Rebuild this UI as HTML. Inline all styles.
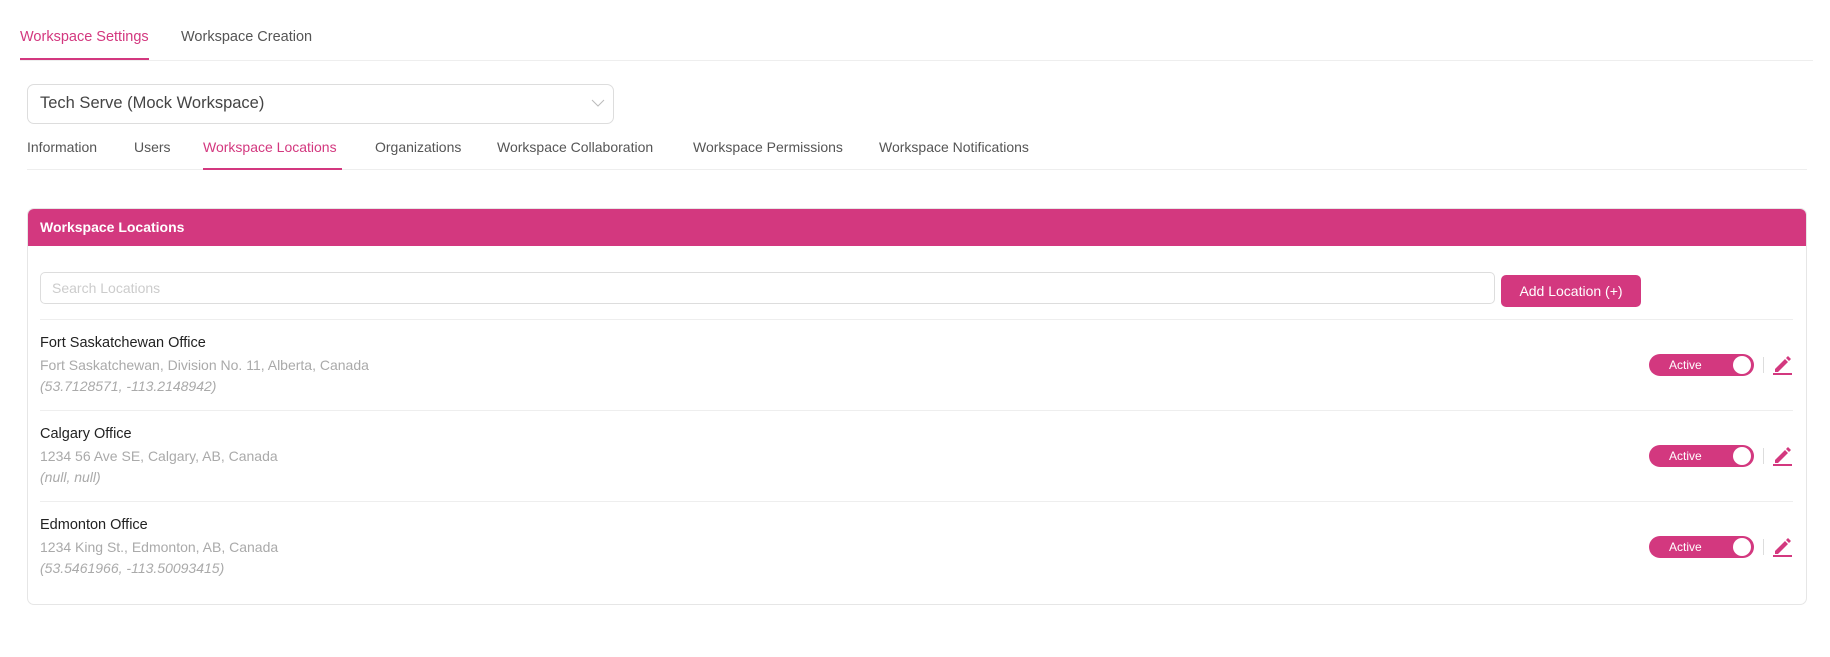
<!DOCTYPE html>
<html><head><meta charset="utf-8"><style>
*{margin:0;padding:0;box-sizing:border-box}
body{width:1830px;height:657px;background:#fff;font-family:"Liberation Sans",sans-serif;position:relative;overflow:hidden;color:#444}
.a{position:absolute;white-space:nowrap}
.tab{font-size:14.5px;color:#555}
.sub{font-size:14px;color:#555}
.pink{color:#d3387f}
.name{font-size:14.5px;color:#222}
.addr{font-size:14px;color:#aaa}
.co{font-size:14px;color:#aaa;font-style:italic}
.tog{position:absolute;left:1649px;width:105px;height:22px;border-radius:11px;background:#d3387f}
.tog span{position:absolute;left:20px;top:4px;font-size:12px;color:#fff}
.tog i{position:absolute;right:3px;top:2px;width:18px;height:18px;border-radius:50%;background:#fff}
.sep{position:absolute;left:1763px;width:1px;height:16px;background:#ddd}
</style></head><body>
<div class="a tab pink" style="left:20px;top:29px">Workspace Settings</div>
<div class="a tab" style="left:181px;top:29px">Workspace Creation</div>
<div class="a" style="left:20px;top:58px;width:129px;height:2px;background:#d3387f"></div>
<div class="a" style="left:20px;top:60px;width:1793px;height:1px;background:#eee"></div>

<div class="a" style="left:27px;top:84px;width:587px;height:40px;border:1px solid #ddd;border-radius:7px"></div>
<div class="a" style="left:40px;top:94px;font-size:16.5px;color:#444">Tech Serve (Mock Workspace)</div>
<svg class="a" style="left:591px;top:98px" width="14" height="10"><path d="M1 2 L7 8 L13 2" fill="none" stroke="#bbb" stroke-width="1"/></svg>

<div class="a sub" style="left:27px;top:139px">Information</div>
<div class="a sub" style="left:134px;top:139px">Users</div>
<div class="a sub pink" style="left:203px;top:139px">Workspace Locations</div>
<div class="a sub" style="left:375px;top:139px">Organizations</div>
<div class="a sub" style="left:497px;top:139px">Workspace Collaboration</div>
<div class="a sub" style="left:693px;top:139px">Workspace Permissions</div>
<div class="a sub" style="left:879px;top:139px">Workspace Notifications</div>
<div class="a" style="left:27px;top:169px;width:1780px;height:1px;background:#eee"></div>
<div class="a" style="left:203px;top:168px;width:139px;height:2px;background:#d3387f"></div>

<div class="a" style="left:27px;top:208px;width:1780px;height:397px;border:1px solid #e6e6e6;border-radius:7px;overflow:hidden">
  <div style="height:37px;background:#d3387f"></div>
</div>
<div class="a" style="left:40px;top:219px;font-size:14px;font-weight:bold;color:#fff">Workspace Locations</div>

<div class="a" style="left:40px;top:272px;width:1455px;height:32px;border:1px solid #ddd;border-radius:5px"></div>
<div class="a" style="left:52px;top:280px;font-size:14px;color:#ccc">Search Locations</div>
<div class="a" style="left:1501px;top:275px;width:140px;height:32px;background:#d3387f;border-radius:5px;color:#fff;font-size:14px;text-align:center;line-height:32px">Add Location (+)</div>
<div class="a" style="left:40px;top:319px;width:1753px;height:1px;background:#eee"></div>

<div class="a name" style="left:40px;top:335px">Fort Saskatchewan Office</div>
<div class="a addr" style="left:40px;top:357px">Fort Saskatchewan, Division No. 11, Alberta, Canada</div>
<div class="a co" style="left:40px;top:378px">(53.7128571, -113.2148942)</div>
<div class="a" style="left:40px;top:410px;width:1753px;height:1px;background:#eee"></div>

<div class="a name" style="left:40px;top:426px">Calgary Office</div>
<div class="a addr" style="left:40px;top:448px">1234 56 Ave SE, Calgary, AB, Canada</div>
<div class="a co" style="left:40px;top:469px">(null, null)</div>
<div class="a" style="left:40px;top:501px;width:1753px;height:1px;background:#eee"></div>

<div class="a name" style="left:40px;top:517px">Edmonton Office</div>
<div class="a addr" style="left:40px;top:539px">1234 King St., Edmonton, AB, Canada</div>
<div class="a co" style="left:40px;top:560px">(53.5461966, -113.50093415)</div>

<div class="tog" style="top:354px"><span>Active</span><i></i></div><div class="sep" style="top:357px"></div>
<div class="tog" style="top:445px"><span>Active</span><i></i></div><div class="sep" style="top:448px"></div>
<div class="tog" style="top:536px"><span>Active</span><i></i></div><div class="sep" style="top:539px"></div>

<svg class="a" style="left:1773px;top:355px" width="20" height="20"><path d="M2 14 L2 17 L5 17 L15 7 L12 4 Z M13 3 L15 1 L18 4 L16 6 Z" fill="#d3387f"/><rect x="0" y="18" width="19" height="2" fill="#d3387f"/></svg>
<svg class="a" style="left:1773px;top:446px" width="20" height="20"><path d="M2 14 L2 17 L5 17 L15 7 L12 4 Z M13 3 L15 1 L18 4 L16 6 Z" fill="#d3387f"/><rect x="0" y="18" width="19" height="2" fill="#d3387f"/></svg>
<svg class="a" style="left:1773px;top:537px" width="20" height="20"><path d="M2 14 L2 17 L5 17 L15 7 L12 4 Z M13 3 L15 1 L18 4 L16 6 Z" fill="#d3387f"/><rect x="0" y="18" width="19" height="2" fill="#d3387f"/></svg>
</body></html>
